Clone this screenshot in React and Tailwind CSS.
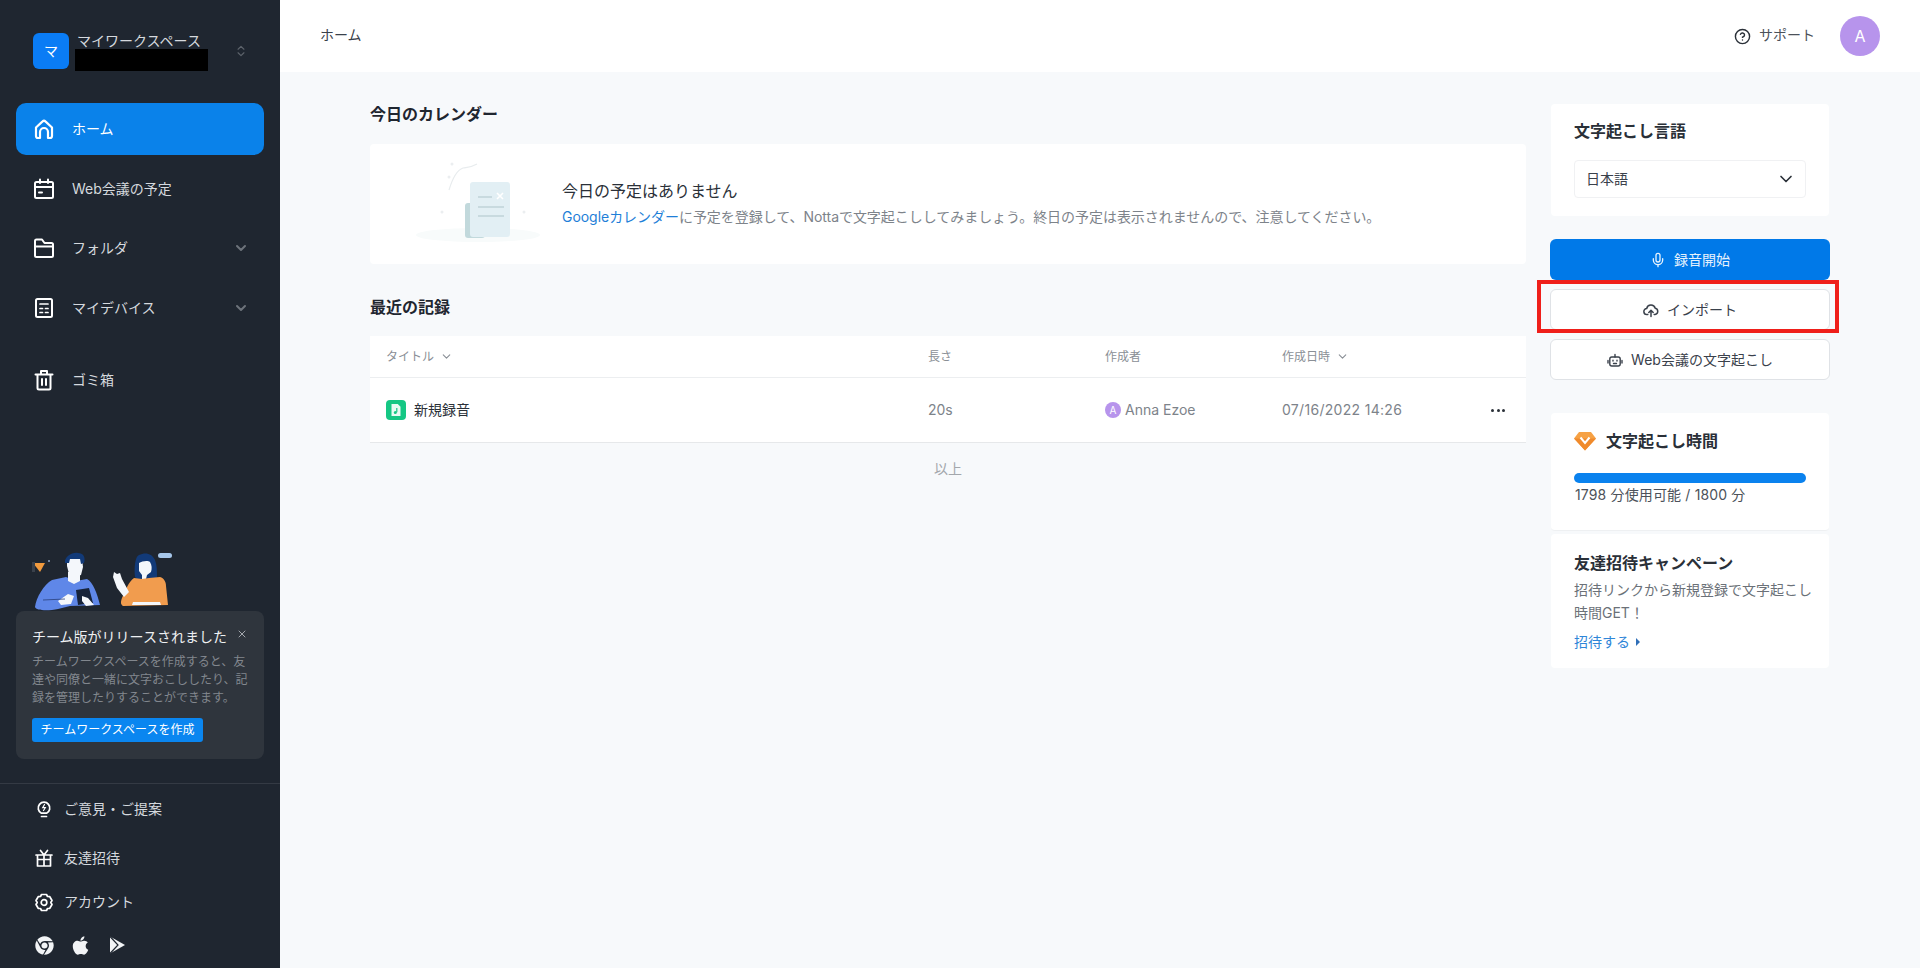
import React from "react";
import { ChevronDown, ChevronsUpDown, CircleHelp, Mic, X } from "lucide-react";
import { FaApple, FaChrome } from "react-icons/fa";

const HomeIcon = () => (
  <svg width="24" height="24" viewBox="0 0 24 24" fill="none" stroke="currentColor" strokeWidth="2.2" strokeLinejoin="round">
    <path d="M4 10.500 10.600 4.400a2 2 0 0 1 2.800 0L20 10.500V19a2 2 0 0 1-2 2h-2v-6a4 4 0 0 0-8 0v6H6a2 2 0 0 1-2-2z" />
  </svg>
);

const CalendarIcon = () => (
  <svg width="24" height="24" viewBox="0 0 24 24" fill="none" stroke="currentColor" strokeWidth="2" strokeLinecap="round">
    <rect x="3" y="5" width="18" height="16" rx="1.5" />
    <path d="M3 10h18M8 2.500V6M16 2.500V6M7 15.500h3" />
  </svg>
);

const FolderIcon = () => (
  <svg width="24" height="24" viewBox="0 0 24 24" fill="none" stroke="currentColor" strokeWidth="2" strokeLinejoin="round">
    <path d="M3 5a1.500 1.500 0 0 1 1.500-1.500h5.500L12.500 7H19.500A1.500 1.500 0 0 1 21 8.500V19.500a1.500 1.500 0 0 1-1.500 1.500h-15A1.500 1.500 0 0 1 3 19.500z" />
    <path d="M3 10.500h18" />
  </svg>
);

const DeviceIcon = () => (
  <svg width="24" height="24" viewBox="0 0 24 24" fill="none" stroke="currentColor" strokeWidth="2" strokeLinecap="round">
    <rect x="4" y="3" width="16" height="18" rx="1.5" />
    <path d="M8 8h8M8 12.500h2.500M13.500 12.500H16M8 16.500h2.500M13.500 16.500H16" strokeWidth="1.700" />
  </svg>
);

const TrashIcon = () => (
  <svg width="24" height="24" viewBox="0 0 24 24" fill="none" stroke="currentColor" strokeWidth="2" strokeLinecap="round" strokeLinejoin="round">
    <path d="M3.500 6.500h17M9 6.500V3h6v3.500M5.500 6.500V20a1.500 1.500 0 0 0 1.500 1.500h10a1.500 1.500 0 0 0 1.500-1.500V6.500M10 11v6M14 11v6" />
  </svg>
);

const BulbIcon = () => (
  <svg width="20" height="20" viewBox="0 0 20 20" fill="none" stroke="currentColor" strokeWidth="1.700" strokeLinecap="round">
    <path d="M7.400 14.200A5.800 5.800 0 1 1 12.600 14.200z" strokeLinejoin="round" />
    <path d="M7.500 17.500h5" />
    <path d="M10.500 5.500 8.700 8.700h2.600l-1.800 2.800" strokeWidth="1.200" />
  </svg>
);

const GiftIcon = () => (
  <svg width="20" height="20" viewBox="0 0 20 20" fill="none" stroke="currentColor" strokeWidth="1.700" strokeLinecap="round" strokeLinejoin="round">
    <path d="M2 7h16M3.500 7v11h13V7M10 7v11M3.500 11.500h13M6.500 2.500 10 7l3.500-4.500" />
  </svg>
);

const GearIcon = () => (
  <svg width="20" height="20" viewBox="0 0 20 20" fill="none" stroke="currentColor" strokeWidth="1.700" strokeLinejoin="round">
    <path d="M7.500 2.500h5l1 2 2.300.2 2.200 3.800L16.800 10.500 18 12.500l-2.200 3.800-2.300.2-1 2h-5l-1-2-2.300-.2L2 12.500l1.200-2L2 8.500l2.200-3.800 2.300-.2z" />
    <circle cx="10" cy="10.500" r="2.800" />
  </svg>
);

const PlayIcon = () => (
  <svg width="20" height="20" viewBox="0 0 20 20">
    <path d="M3 1.500 18 10 3 18.500z" fill="#f2f4f6" />
    <path d="M3 1.500 11 10 3 18.500" fill="none" stroke="#1f2630" strokeWidth="1.200" />
  </svg>
);

const CloudUploadIcon = () => (
  <svg width="16" height="16" viewBox="0 0 16 16" fill="none" stroke="currentColor" strokeWidth="1.500" strokeLinecap="round" strokeLinejoin="round">
    <path d="M4.800 12.500H4A3 3 0 0 1 3.700 6.500 4.400 4.400 0 0 1 12.200 6.200 3.200 3.200 0 0 1 12 12.500h-.8" />
    <path d="M8 14.500V8.500M5.800 10.500 8 8.200l2.200 2.300" />
  </svg>
);

const RobotIcon = () => (
  <svg width="16" height="16" viewBox="0 0 16 16" fill="none" stroke="currentColor" strokeWidth="1.400" strokeLinecap="round" strokeLinejoin="round">
    <rect x="2.800" y="5" width="10.400" height="9" rx="2" />
    <path d="M8 5V2.500M1 8.500v2.500M15 8.500v2.500M6 8.300v.7M10 8.300v.7M6.500 11.500h3" />
  </svg>
);

const DiamondIcon = () => (
  <svg width="22" height="20" viewBox="0 0 22 20">
    <path d="M5 1h12l5 6.500L11 19.500 0 7.500z" fill="#f6a144" />
    <path d="M0 7.500h22L11 19.500z" fill="#f08a2c" />
    <path d="M6.500 6.500 11 12l4.500-5.500" fill="none" stroke="#fff" strokeWidth="2" />
  </svg>
);

const FileAudioIcon = () => (
  <svg width="20" height="20" viewBox="0 0 20 20">
    <rect width="20" height="20" rx="4" fill="#15c784" />
    <path d="M5.500 4h6.300l2.700 2.700V16h-9z" fill="#e9fbf4" />
    <path d="M10.800 8v4.300" stroke="#15c784" strokeWidth="1.200" fill="none" />
    <circle cx="9.300" cy="12.600" r="1.500" fill="#15c784" />
  </svg>
);

// people above the team card, coordinates follow the page so it's easy to nudge
const TeamIllustration = () => (
  <svg className="block" width="200" height="71" viewBox="0 540 200 71">
    <path d="M33 563h12l-5 9z" fill="#f19a3e" />
    <rect x="32" y="562" width="3" height="10" fill="#3a414b" />
    <circle cx="49" cy="561" r="1" fill="#8fa6c9" />
    {/* man */}
    <path d="M35 607c1-9 9-23 17-27l14-3 10 4 11-2c6 3 10 14 13 26l-30 1-12 3c-9 2-22 2-23-2z" fill="#5f87e8" />
    <path d="M68 572h12v9l-6 3-6-3z" fill="#f4f7fb" />
    <path d="M67 558h15l1 9-2 8-6 2-6-3-2-8z" fill="#f4f7fb" />
    <path d="M65 563c-1-6 7-11 13-10 5 0 8 4 6 10l-3 1-1-5-10 0-1 4z" fill="#123a78" />
    <path d="M76 590l13-2 4 15-15 2z" fill="#17233a" />
    <path d="M58 601l10-7 6 2-3 8-10 1zM82 596l6 2 6 7-8 1-4-5z" fill="#f4f7fb" />
    <path d="M43 600l22-1" stroke="#2a3f7a" strokeWidth="0.800" fill="none" />
    {/* woman */}
    <path d="M135 577c-1-8 0-21 4-22 6-3 13-2 16 5 2 5 2 12 2 17l-3 3h-16z" fill="#123a78" />
    <path d="M139 563c3-2 9-3 11-1 2 3 2 7 1 10l-4 3-1 4h-4v-4l-3-4z" fill="#f4f7fb" />
    <path d="M122 598c3-7 7-17 12-20l8 1 7-1 11-1c4 1 6 5 6 9l2 19-45 1c-3-2-2-5-1-8z" fill="#f19c4e" />
    <path d="M114 572l3 2 3-1 2 6 7 13-5 5-7-9-4-11z" fill="#f4f7fb" />
    <path d="M133 602h27l1 3h-29z" fill="#f4f7fb" />
    <rect x="158" y="553" width="14" height="5" rx="2.500" fill="#a6c6ea" />
  </svg>
);

const DocIllustration = () => (
  <svg className="block" width="160" height="110" viewBox="400 140 160 110">
    <ellipse cx="478" cy="226" rx="62" ry="7" fill="#f8fbfb" />
    <path d="M449 181c3-10 8-20 14-22 6-1 9-1 14-4" fill="none" stroke="#e8ecee" strokeWidth="1.200" />
    <circle cx="452" cy="155" r="1.500" fill="#ebeef0" />
    <circle cx="449" cy="168" r="1.500" fill="#ebeef0" />
    <circle cx="442" cy="203" r="1.500" fill="#ebeef0" />
    <circle cx="524" cy="203" r="1.500" fill="#ebeef0" />
    <rect x="465" y="194" width="20" height="35" rx="3" fill="#c2d9dc" />
    <rect x="470" y="173" width="40" height="55" rx="3" fill="#e2eff4" />
    <path d="M478 188h14M478 198h26M478 207h26" stroke="#c0d3d8" strokeWidth="1.600" />
    <path d="M497 184l6 6M503 184l-6 6" stroke="#fff" strokeWidth="1.600" />
  </svg>
);

const navItems = [
  { label: "ホーム", icon: HomeIcon, active: true },
  { label: "Web会議の予定", icon: CalendarIcon },
  { label: "フォルダ", icon: FolderIcon, arrow: true },
  { label: "マイデバイス", icon: DeviceIcon, arrow: true },
];

const footerLinks = [
  { label: "ご意見・ご提案", icon: BulbIcon, height: "h-[50px]" },
  { label: "友達招待", icon: GiftIcon, height: "h-[48px]" },
  { label: "アカウント", icon: GearIcon, height: "h-[40px]" },
];

const NavRow = ({ item }) => {
  const Icon = item.icon;
  return (
    <div className={`flex h-[52px] items-center rounded-[10px] pl-[16px] pr-[15px] text-sm ${item.active ? "bg-[#0a82ea] text-white" : "text-[#d5d9de]"}`}>
      <span className="text-white"><Icon /></span>
      <span className="ml-[16px] flex-1">{item.label}</span>
      {item.arrow && <ChevronDown size={16} strokeWidth={3} className="text-[#6d737b]" />}
    </div>
  );
};

const Sidebar = () => (
  <aside className="flex h-[968px] w-[280px] shrink-0 flex-col bg-[#1f2630]">
    {/* workspace switcher */}
    <div className="flex h-[103px] items-start pl-[33px] pr-[32px] pt-[33px]">
      <div className="flex h-[36px] w-[36px] items-center justify-center rounded-[6px] bg-[#0a7cf5] text-sm text-white">マ</div>
      <div className="ml-[6px] flex-1">
        <div className="ml-[2px] text-sm leading-[16px] text-[#d5d9de]">マイワークスペース</div>
        <div className="h-[22px] w-[133px] bg-black"></div>
      </div>
      <ChevronsUpDown size={14} className="mt-[11px] text-[#5d636b]" />
    </div>

    <nav className="flex flex-col gap-[7.5px] px-[16px]">
      {navItems.map((item) => (
        <NavRow key={item.label} item={item} />
      ))}
      <div className="mt-[13px]">
        <NavRow item={{ label: "ゴミ箱", icon: TrashIcon }} />
      </div>
    </nav>

    <div className="mt-auto">
      <TeamIllustration />
      <div className="relative mx-[16px] h-[148px] rounded-[8px] bg-[#2f353d] px-[16px] pt-[15px]">
        <X size={12} className="absolute right-[16px] top-[17px] text-[#a4a8ae]" />
        <div className="text-sm leading-[22px] text-[#eef0f2]">チーム版がリリースされました</div>
        <p className="mt-[5px] text-xs leading-[18px] text-[#82878e]">
          チームワークスペースを作成すると、友達や同僚と一緒に文字おこししたり、記録を管理したりすることができます。
        </p>
        <div className="mt-[11px] flex h-[24px] w-[171px] items-center justify-center rounded-[3px] bg-[#0a86f0] text-xs text-white">
          チームワークスペースを作成
        </div>
      </div>

      <div className="mt-[24px] border-t border-[#343a44]">
        {footerLinks.map((link) => {
          const Icon = link.icon;
          return (
            <div key={link.label} className={`flex items-center pl-[34px] text-sm text-[#d5d9de] ${link.height}`}>
              <span className="text-white"><Icon /></span>
              <span className="ml-[10px]">{link.label}</span>
            </div>
          );
        })}
        <div className="flex h-[46px] items-center gap-[16px] pl-[35px] text-[#f2f4f6]">
          <FaChrome size={19} />
          <FaApple size={21} />
          <PlayIcon />
        </div>
      </div>
    </div>
  </aside>
);

const Header = () => (
  <header className="flex h-[72px] items-center justify-between bg-white px-[40px]">
    <span className="mb-[2px] text-sm text-[#3a414b]">ホーム</span>
    <div className="flex items-center">
      <CircleHelp size={17} className="text-[#2a3038]" />
      <span className="mb-[2px] ml-[8px] text-sm text-[#4c525a]">サポート</span>
      <div className="ml-[25px] flex h-[40px] w-[40px] items-center justify-center rounded-full bg-[#b794ec] text-base text-white">A</div>
    </div>
  </header>
);

const CalendarCard = () => (
  <div className="flex h-[120px] items-center rounded-[4px] bg-white">
    <div className="ml-[30px]"><DocIllustration /></div>
    <div className="ml-[2px] pb-[3px]">
      <div className="text-base leading-[24px] text-[#2a3038]">今日の予定はありません</div>
      <p className="mt-[4px] text-sm leading-[20px] tracking-[-0.04px] text-[#7d838a]">
        <span className="text-[#1f7fd8]">Googleカレンダー</span>
        に予定を登録して、Nottaで文字起こししてみましょう。終日の予定は表示されませんので、注意してください。
      </p>
    </div>
  </div>
);

const RecordTable = () => (
  <div className="bg-white">
    <div className="flex h-[42px] items-center border-b border-[#eceef0] text-xs text-[#8a8f96]">
      <div className="flex w-[558px] items-center gap-[6px] pl-[16px]">タイトル <ChevronDown size={13} /></div>
      <div className="w-[177px]">長さ</div>
      <div className="w-[177px]">作成者</div>
      <div className="flex items-center gap-[6px]">作成日時 <ChevronDown size={13} /></div>
    </div>
    <div className="flex h-[65px] items-center border-b border-[#e6e8ea] text-sm text-[#7d838a]">
      <div className="flex w-[558px] items-center gap-[8px] pl-[16px] text-[#2a3038]"><FileAudioIcon />新規録音</div>
      <div className="w-[177px]">20s</div>
      <div className="flex w-[177px] items-center gap-[4px]">
        <span className="flex h-[16px] w-[16px] items-center justify-center rounded-full bg-[#b794ec] text-[10px] text-white">A</span>
        Anna Ezoe
      </div>
      <div className="flex-1 tracking-[0.3px]">07/16/2022 14:26</div>
      <div className="mr-[21px] flex gap-[2.500px]">
        <span className="h-[3px] w-[3px] rounded-full bg-[#2a3038]"></span>
        <span className="h-[3px] w-[3px] rounded-full bg-[#2a3038]"></span>
        <span className="h-[3px] w-[3px] rounded-full bg-[#2a3038]"></span>
      </div>
    </div>
  </div>
);

const RightColumn = () => (
  <div className="w-[280px] shrink-0 pt-[32px]">
    <div className="mx-px h-[112px] rounded-[4px] bg-white px-[23px] pt-[15px]">
      <div className="text-base font-semibold leading-[24px] text-[#2a3038]">文字起こし言語</div>
      <div className="mt-[17px] flex h-[38px] w-[232px] items-center justify-between rounded-[4px] border border-[#f0f1f3] pl-[11px] pr-[9px] text-sm text-[#3a414b]">
        日本語
        <ChevronDown size={20} className="text-[#2a3038]" />
      </div>
    </div>

    <button className="mt-[23px] flex h-[41px] w-full items-center justify-center gap-[8px] rounded-[6px] bg-[#0079e8] text-sm text-[#e6f2fd]">
      <Mic size={16} />
      録音開始
    </button>
    <div className="relative mt-[9px]">
      <button className="flex h-[41px] w-full items-center justify-center gap-[8px] rounded-[6px] border border-[#dfe2e6] bg-white text-sm text-[#3a414b]">
        <CloudUploadIcon />
        インポート
      </button>
      <div className="pointer-events-none absolute bottom-[-3px] left-[-13px] right-[-9px] top-[-9px] border-[4px] border-[#ef1f1a]"></div>
    </div>
    <button className="mt-[9px] flex h-[41px] w-full items-center justify-center gap-[8px] rounded-[6px] border border-[#dfe2e6] bg-white text-sm text-[#3a414b]">
      <RobotIcon />
      Web会議の文字起こし
    </button>

    <div className="mx-px mt-[33px] h-[118px] rounded-[4px] border-b border-[#eef0f2] bg-white px-[23px] pt-[16px]">
      <div className="flex items-center gap-[10px] text-base font-semibold leading-[24px] text-[#2a3038]">
        <DiamondIcon />
        文字起こし時間
      </div>
      <div className="mt-[20px] h-[10px] w-[232px] rounded-full bg-[#0a82ee]"></div>
      <div className="ml-px mt-[2px] text-sm leading-[20px] tracking-[0.15px] text-[#4c525a]">1798 分使用可能 / 1800 分</div>
    </div>

    <div className="mx-px mt-[3px] h-[134px] rounded-[4px] bg-white pl-[23px] pr-[10px] pt-[17px]">
      <div className="text-base font-semibold leading-[24px] text-[#2a3038]">友達招待キャンペーン</div>
      <p className="mt-[3px] text-sm leading-[23px] text-[#6b7178]">招待リンクから新規登録で文字起こし時間GET！</p>
      <div className="mt-[8px] flex items-center gap-[6px] text-sm leading-[20px] text-[#2f86d8]">
        招待する
        <span className="h-0 w-0 border-y-[4px] border-l-[4px] border-y-transparent border-l-[#2f6fb8]"></span>
      </div>
    </div>
  </div>
);

export default function App() {
  return (
    <div className="flex h-[968px] w-[1920px] overflow-hidden bg-[#f7f9fb] font-[Inter,'Noto_Sans_CJK_JP',sans-serif]">
      <Sidebar />
      <main className="flex-1">
        <Header />
        <div className="flex gap-[24px] pl-[90px]">
          <div className="w-[1156px] shrink-0 pt-[30px]">
            <h2 className="text-base font-semibold leading-[24px] text-[#1f2630]">今日のカレンダー</h2>
            <div className="mt-[18px]"><CalendarCard /></div>
            <h2 className="mt-[31px] text-base font-semibold leading-[24px] text-[#1f2630]">最近の記録</h2>
            <div className="mt-[17px]"><RecordTable /></div>
            <div className="mt-[16px] text-center text-sm leading-[20px] text-[#a3a7ac]">以上</div>
          </div>
          <RightColumn />
        </div>
      </main>
    </div>
  );
}
